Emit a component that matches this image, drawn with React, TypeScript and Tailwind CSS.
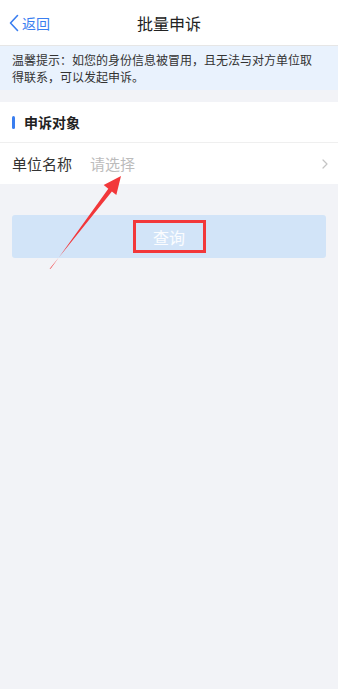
import React from 'react';

export default function App() {
  return (
    <div
      className="relative min-h-[689px] w-full bg-[#f2f3f7] text-[#333]"
      style={{ fontFamily: '"Noto Sans CJK SC", "Noto Sans", sans-serif' }}
    >
      {/* Header */}
      <header className="relative flex h-[46px] items-center justify-center border-b border-[#e6e6e6] bg-white">
        <button className="absolute left-[9px] top-0 flex h-full items-center text-[#3a7ef0]">
          <svg width="10" height="18" viewBox="0 0 10 18" fill="none">
            <path d="M8.5 1.5 1.5 9l7 7.5" stroke="currentColor" strokeWidth="1.6" strokeLinecap="round" strokeLinejoin="round" />
          </svg>
          <span className="ml-[3px] text-[14px] leading-none">返回</span>
        </button>
        <h1 className="text-[16px] font-normal leading-none text-[#222]">批量申诉</h1>
      </header>

      {/* Notice */}
      <div className="bg-[#e9f2fd] py-[5px] pl-3 pr-5 text-[12px] leading-[17px] text-[#333]">
        温馨提示：如您的身份信息被冒用，且无法与对方单位取得联系，可以发起申诉。
      </div>

      {/* Section */}
      <section className="mt-3 bg-white">
        <div className="flex h-[41px] items-center border-b border-[#efefef] px-3">
          <span className="h-[13px] w-[3px] rounded-full bg-[#3a7ef0]" />
          <span className="ml-[9px] text-[14px] font-bold leading-none text-[#222]">申诉对象</span>
        </div>
        <div className="flex h-[41px] items-center px-3">
          <span className="w-[78px] text-[15px] leading-none text-[#333]">单位名称</span>
          <span className="flex-1 text-[15px] leading-none text-[#bcbcbc]">请选择</span>
          <svg width="6" height="10" viewBox="0 0 6 10" fill="none" className="mr-[-2px]">
            <path d="M1 1l4 4-4 4" stroke="#c4c4c4" strokeWidth="1.2" strokeLinecap="round" strokeLinejoin="round" />
          </svg>
        </div>
      </section>

      {/* Query button */}
      <div className="relative mx-3 mt-[31px]">
        <button className="flex h-[43px] w-full items-center justify-center rounded-[3px] bg-[#d2e4f8] text-[16px] text-white/90">
          查询
        </button>
        <div className="pointer-events-none absolute left-[121px] top-[5px] h-[33px] w-[73px] border-[3px] border-[#f2373a]" />
      </div>

      {/* Annotation arrow */}
      <svg
        className="pointer-events-none absolute left-0 top-0"
        width="338"
        height="300"
        viewBox="0 0 338 300"
      >
        <polygon
          points="49.5,269 50.8,268.6 108.3,188.7 103.7,185.1 121,176 116.3,194.9 111.9,191.6"
          fill="#f2373a"
        />
      </svg>
    </div>
  );
}
